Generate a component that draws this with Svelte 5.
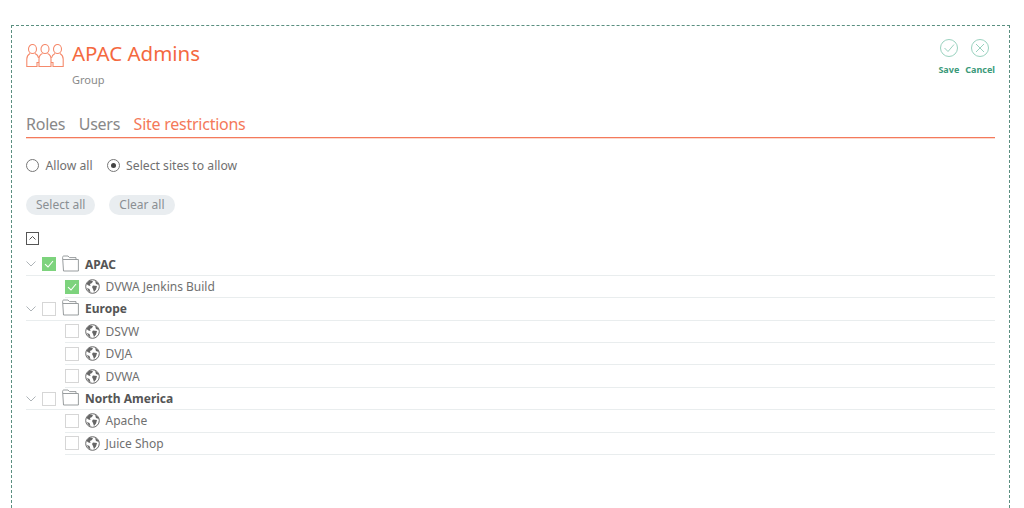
<script>
  const groups = [
    { name: "APAC", checked: true, sites: [{ name: "DVWA Jenkins Build", checked: true }] },
    { name: "Europe", checked: false, sites: [{ name: "DSVW" }, { name: "DVJA" }, { name: "DVWA" }] },
    { name: "North America", checked: false, sites: [{ name: "Apache" }, { name: "Juice Shop" }] },
  ];
</script>

{#snippet checkbox(checked)}
  <span class="check" class:checked>
    {#if checked}
      <svg width="14" height="14" viewBox="0 0 14 14"><path d="M3 7.200 L6 10 L11 4" fill="none" stroke="#fff" stroke-width="1.1" /></svg>
    {/if}
  </span>
{/snippet}

<div class="frame">
  <header class="head">
    <div class="title-block">
      <svg class="group-icon" width="38" height="24" viewBox="0 0 38 24" fill="none" stroke="#f58a6c" stroke-width="1.1">
        <ellipse cx="6.500" cy="5" rx="4" ry="4.500" />
        <ellipse cx="19" cy="5" rx="4" ry="4.500" />
        <ellipse cx="31.500" cy="5" rx="4" ry="4.500" />
        <path d="M4 9.500 C1.500 11 .8 13 .8 15 V22.500 H11 V18 M9 9.500 C11 10.500 12.300 12 12.500 14" />
        <path d="M16.500 9.500 C14 10.500 13 13 13 15 V22.500 H25 V15 C25 13 24 10.500 21.500 9.500" />
        <path d="M29 9.500 C27 10.500 25.800 12 25.500 14 M27 18 V22.500 H37.200 V15 C37.200 13 36.500 11 34 9.500" />
        <path d="M11 18.500 H13 M25 18.500 H27" />
      </svg>
      <div>
        <h1>APAC Admins</h1>
        <div class="subtitle">Group</div>
      </div>
    </div>
    <div class="actions">
      <button>
        <svg width="20" height="20" viewBox="0 0 20 20" fill="none" stroke="#9ad2bf" stroke-width="1">
          <circle cx="10" cy="10" r="8.500" />
          <path d="M5.500 10 L9 13.500 L15 6.500" />
        </svg>
        <span>Save</span>
      </button>
      <button>
        <svg width="20" height="20" viewBox="0 0 20 20" fill="none" stroke="#9ad2bf" stroke-width="1">
          <circle cx="10" cy="10" r="8.500" />
          <path d="M6 6 L14 14 M14 6 L6 14" />
        </svg>
        <span>Cancel</span>
      </button>
    </div>
  </header>

  <nav class="tabs">
    <span>Roles</span>
    <span>Users</span>
    <span class="active">Site restrictions</span>
  </nav>

  <div class="radios">
    <label><span class="radio"></span>Allow all</label>
    <label><span class="radio on"></span>Select sites to allow</label>
  </div>

  <div class="pills">
    <span class="pill">Select all</span>
    <span class="pill">Clear all</span>
  </div>

  <div class="collapse">
    <svg width="13" height="13" viewBox="0 0 13 13" fill="none" stroke="#555" stroke-width="1">
      <rect x=".5" y=".5" width="12" height="12" />
      <path d="M3.500 7.500 L6.500 4.500 L9.500 7.500" />
    </svg>
  </div>

  <div class="tree">
    {#each groups as group}
      <div class="row group-row">
        <svg class="chevron" width="10" height="6" viewBox="0 0 10 6" fill="none" stroke="#aeb4b8" stroke-width="1"><path d="M.5 .5 L5 5 L9.500 .5" /></svg>
        {@render checkbox(group.checked)}
        <svg class="folder" width="17" height="17" viewBox="0 0 17 17" fill="none" stroke="#8d9294" stroke-width=".9">
          <path d="M1.500 16 L.6 2.500 C.6 1.500 1 1 2 1 H6 L7.500 2.600 H14 V4.500 M1 4.500 H16.400 V16 H1.500" />
        </svg>
        <strong>{group.name}</strong>
      </div>
      {#each group.sites as site}
        <div class="row site-row">
          {@render checkbox(site.checked)}
          <svg class="globe" width="15" height="15" viewBox="0 0 15 15">
            <circle cx="7.500" cy="7.500" r="6.800" fill="#fff" stroke="#666" stroke-width="1" />
            <path d="M5 1.500 L8 2 L7 4 L5 5 L5.500 7 L3.500 6.500 L1.500 5 C2 3.500 3.500 2 5 1.500 Z" fill="#666" />
            <path d="M8 6.500 L12 7 L11 10.500 L9 13 L8 10 L7 8 Z" fill="#666" />
            <path d="M10 1.800 L13 4 L13.800 6 L11 5 Z" fill="#666" />
            <path d="M2 9 L4.500 10 L5.500 13.300 C4 13 2.500 11 2 9 Z" fill="#666" />
          </svg>
          <span class="site-name">{site.name}</span>
        </div>
      {/each}
    {/each}
  </div>
</div>

<style>
  :global(body) {
    background: #fff;
    font-family: "Noto Sans", "Open Sans", sans-serif;
    color: #777;
  }

  .frame {
    box-sizing: border-box;
    margin: 25px 14px 0 11px;
    height: 483px;
    padding: 0 14px 0 14px;
    border: 1px dashed #5a8f80;
    border-bottom: none;
  }

  .head {
    display: flex;
    justify-content: space-between;
    height: 82px;
    padding-top: 14px;
    box-sizing: border-box;
  }

  .title-block {
    display: flex;
    align-items: flex-start;
    gap: 8px;
  }

  .group-icon {
    margin-top: 4px;
  }

  h1 {
    margin: -1px 0 0;
    font-size: 20.5px;
    line-height: 29px;
    font-weight: 400;
    color: #f4693f;
  }

  .subtitle {
    margin-top: 4px;
    font-size: 11px;
    line-height: 15px;
    color: #8a8a8a;
  }

  .actions {
    display: flex;
    gap: 6px;
    margin-top: -2px;
  }

  .actions button {
    display: flex;
    flex-direction: column;
    align-items: center;
    gap: 6px;
    padding: 0;
    border: none;
    background: none;
    font: inherit;
    font-size: 9px;
    font-weight: 700;
    line-height: 12px;
    color: #3b9a7a;
  }

  .tabs {
    display: flex;
    gap: 13.500px;
    height: 29px;
    font-size: 16px;
    letter-spacing: -.25px;
    line-height: 32px;
    color: #888;
    border-bottom: 1px solid #f47a5c;
    box-shadow: 0 1px 0 #fcd9cf;
  }

  .tabs .active {
    color: #f4795a;
  }

  .radios {
    display: flex;
    gap: 14px;
    margin-top: 19px;
    font-size: 12.200px;
    line-height: 17px;
    color: #707070;
  }

  .radios label {
    display: flex;
    align-items: center;
    gap: 6.500px;
  }

  .radio {
    box-sizing: border-box;
    width: 13px;
    height: 13px;
    border: 1px solid #777;
    border-radius: 50%;
    display: flex;
    align-items: center;
    justify-content: center;
  }

  .radio.on::after {
    content: "";
    width: 5px;
    height: 5px;
    border-radius: 50%;
    background: #444;
  }

  .pills {
    display: flex;
    gap: 14px;
    margin-top: 21px;
  }

  .pill {
    padding: 0 10px;
    height: 20px;
    line-height: 20px;
    border-radius: 10px;
    background: #e9edf0;
    font-size: 12px;
    color: #8a8f93;
  }

  .collapse {
    margin-top: 17px;
    height: 13px;
  }

  .collapse svg {
    display: block;
  }

  .tree {
    margin-top: 8.500px;
  }

  .row {
    box-sizing: border-box;
    height: 22.4px;
    display: flex;
    align-items: center;
    font-size: 12px;
    border-bottom: 1px solid #e9edee;
  }

  .row strong {
    font-weight: 700;
    color: #555;
  }

  .chevron {
    margin: 0 6px 0 0;
  }

  .folder {
    margin: -2px 6px 0 6px;
  }

  .site-row {
    margin-left: 39px;
  }

  .globe {
    margin: 0 5.500px 0 6px;
  }

  .site-name {
    color: #707070;
  }

  .check {
    box-sizing: border-box;
    width: 14px;
    height: 14px;
    border: 1px solid #d6d6d6;
    display: block;
  }

  .check.checked {
    border: none;
    background: #7dd37d;
  }

  .check svg {
    display: block;
  }
</style>
